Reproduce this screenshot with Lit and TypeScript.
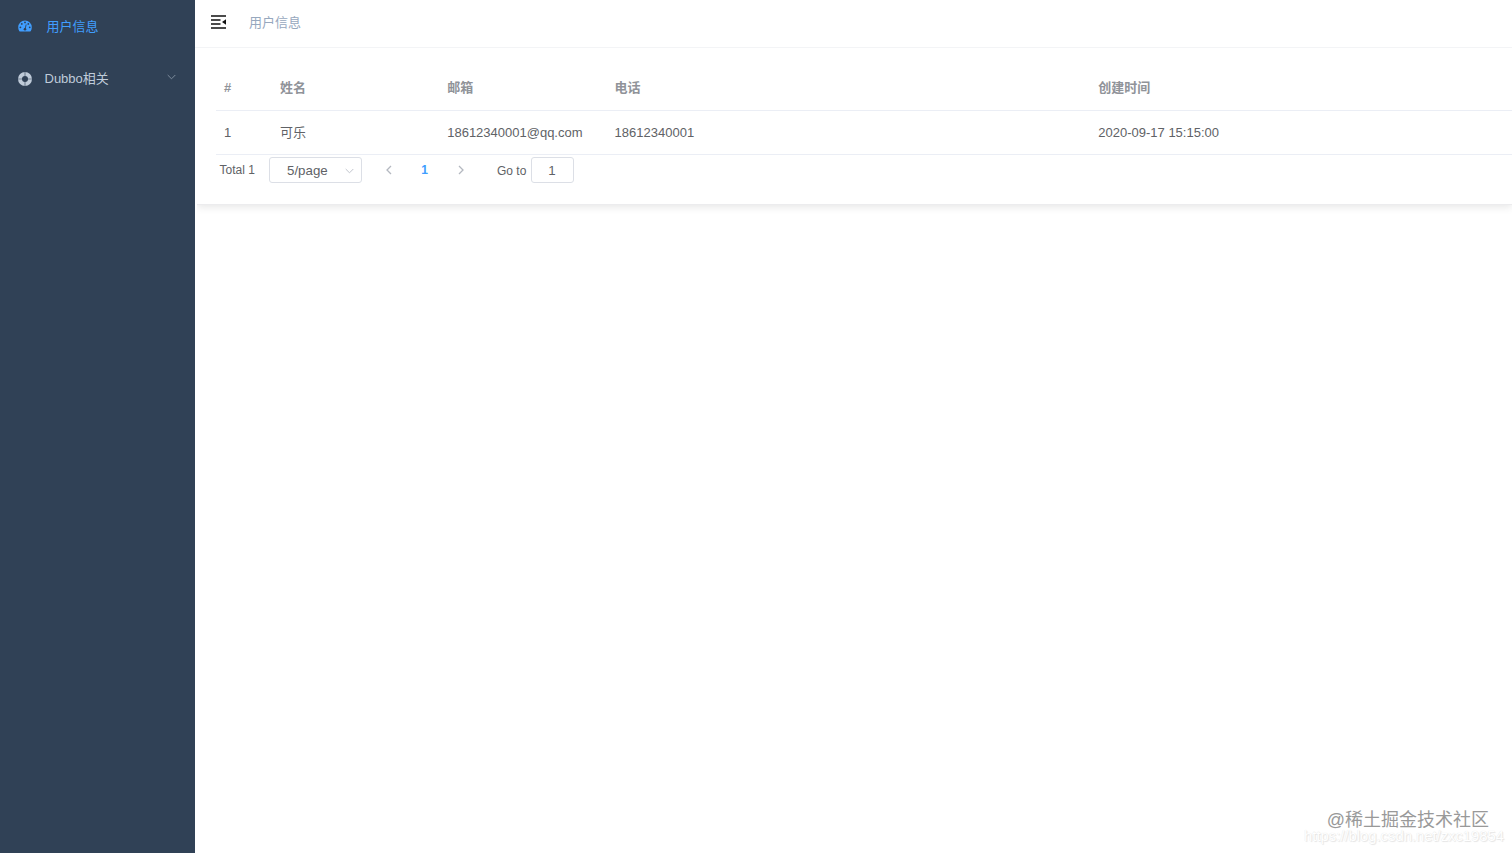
import { LitElement, html, css } from "lit";
import { customElement } from "lit/decorators.js";

interface User {
  id: number;
  name: string;
  email: string;
  phone: string;
  created: string;
}

const users: User[] = [
  { id: 1, name: "可乐", email: "18612340001@qq.com", phone: "18612340001", created: "2020-09-17 15:15:00" },
];

const isHan = (v: string | number) => /[\u4e00-\u9fff]/.test(String(v));

const cell = (v: string | number) => html`<span class="cell ${isHan(v) ? "han" : ""}">${v}</span>`;

@customElement("app-sidebar")
class AppSidebar extends LitElement {
  static styles = css`
    :host { display: block; box-sizing: border-box; width: 195px; flex: none; background: #304156; }
    .item { display: flex; align-items: center; box-sizing: border-box; height: 52px; padding: 2px 19px 0 18px; font-size: 13px; color: #bfcbd9; }
    .item.active { color: #409eff; }
    .icon { width: 14px; height: 14px; flex: none; margin: 0 12.5px 0 0; }
    .active .icon { margin: -2px 14.5px 0 0; }
    .label { flex: 1; padding-bottom: 3px; }
    .active .label { padding-bottom: 4px; }
    .arrow { width: 9px; height: 6px; margin-top: -4px; }
  `;
  render() {
    return html`
      <nav>
        <div class="item active">
          <svg class="icon" viewBox="0 0 14 14">
            <path fill="currentColor" d="M7 1.4A6.8 6.8 0 0 0 .2 8.2c0 1.4.3 2.7 1 3.9.1.2.3.4.6.4h10.4c.3 0 .5-.2.6-.4.7-1.2 1-2.5 1-3.9A6.8 6.8 0 0 0 7 1.4z" />
            <g fill="#304156">
              <circle cx="2.4" cy="8.3" r=".9" /><circle cx="3.8" cy="4.9" r=".9" />
              <circle cx="7" cy="3.4" r=".9" /><circle cx="10.3" cy="4.9" r=".9" />
              <circle cx="11.7" cy="8.3" r=".9" /><circle cx="7" cy="10.3" r="1.3" />
            </g>
            <path d="M7 10.3L8.1 5.9" stroke="#304156" stroke-width=".9" stroke-linecap="round" />
          </svg>
          <span class="label">用户信息</span>
        </div>
        <div class="item">
          <svg class="icon" viewBox="0 0 14 14">
            <circle cx="7" cy="7" r="5" fill="none" stroke="currentColor" stroke-width="4" />
            <path d="M7 0v4.500M7 9.500v4.500M0 7h4.500M9.500 7h4.500" stroke="#304156" stroke-width="1.200" opacity=".5" />
          </svg>
          <span class="label">Dubbo相关</span>
          <svg class="arrow" viewBox="0 0 9 6"><path d="M.7 1l3.8 3.8L8.3 1" fill="none" stroke="#8795a5" stroke-width=".9" /></svg>
        </div>
      </nav>
    `;
  }
}

@customElement("app-pagination")
class AppPagination extends LitElement {
  static styles = css`
    :host { display: flex; height: 26px; margin-top: 2px; padding-left: 3.5px; font-size: 12px; line-height: 26px; color: #606266; }
    .total { width: 49px; flex: none; }
    .box { box-sizing: border-box; height: 26px; border: 1px solid #dcdfe6; border-radius: 3px; font-size: 13.3px; background: #fff; }
    .size { display: flex; align-items: center; justify-content: space-between; width: 93px; padding: 1px 7px 0 17.5px; }
    .chev { width: 9px; height: 6px; }
    .pager { display: flex; align-items: center; margin-left: 23px; padding-bottom: 1px; }
    .pager svg { width: 8px; height: 10px; }
    .current { width: 64px; text-align: center; font-weight: 700; color: #409eff; }
    .goto { margin-left: 32.5px; width: 33.5px; line-height: 28px; }
    .jump { width: 43px; text-align: center; line-height: 26px; }
  `;
  render() {
    return html`
      <span class="total">Total 1</span>
      <div class="box size">
        <span>5/page</span>
        <svg class="chev" viewBox="0 0 9 6"><path d="M.7 1l3.8 3.8L8.3 1" fill="none" stroke="#c0c4cc" stroke-width="1" /></svg>
      </div>
      <div class="pager">
        <svg viewBox="0 0 8 10"><path d="M6 1L2 5l4 4" fill="none" stroke="#b4b8c0" stroke-width="1.3" /></svg>
        <span class="current">1</span>
        <svg viewBox="0 0 8 10"><path d="M2 1l4 4-4 4" fill="none" stroke="#b4b8c0" stroke-width="1.3" /></svg>
      </div>
      <span class="goto">Go to</span>
      <div class="box jump">1</div>
    `;
  }
}

@customElement("app-root")
class AppRoot extends LitElement {
  static styles = css`
    :host { display: flex; position: relative; height: 100vh; overflow: hidden; background: #fff; font-family: "Liberation Sans", "Noto Sans CJK SC", sans-serif; font-size: 13px; }
    .main { flex: 1; min-width: 0; }
    .navbar { display: flex; align-items: center; box-sizing: border-box; height: 48px; padding: 0 0 1px 16px; border-bottom: 1px solid #f3f4f6; color: #97a8be; }
    .burger { width: 15px; height: 14px; margin: -2px 23px 0 0; }
    .title { padding-bottom: 3px; }
    .card { box-sizing: border-box; height: 157px; margin-left: 2px; padding: 18px 0 0 19px; border-bottom: 1px solid #ececee; box-shadow: 0 2px 8px rgba(0, 0, 0, 0.1); clip-path: inset(0 0 -20px 0); }
    .row { display: grid; grid-template-columns: 56px 167.2px 167.4px 483.7px 1fr; align-items: center; box-sizing: border-box; height: 44px; border-bottom: 1px solid #ebeef5; color: #606266; }
    .row.head { height: 45px; padding-bottom: 1px; font-weight: 700; color: #909399; }
    .cell { padding-left: 8px; white-space: nowrap; }
    .han { padding-bottom: 3px; }
    .mark { position: absolute; right: 8px; bottom: 9px; text-align: right; white-space: nowrap; }
    .brand { padding: 1px 15px 0 0; margin-bottom: -1px; font-size: 18px; line-height: 18px; color: #999; text-shadow: -1px -1px 0 #fff; }
    .url { font-size: 14.8px; line-height: 16px; color: #fff; text-shadow: 0 0 1px #ddd, 1px 1px 1px #e6e6e6; }
  `;
  render() {
    return html`
      <app-sidebar></app-sidebar>
      <main class="main">
        <header class="navbar">
          <svg class="burger" viewBox="0 0 15 14">
            <path d="M0 1h15M0 5h9.5M0 9h9.5M0 13h15" stroke="#111" stroke-width="1.5" />
            <path d="M11 7l4-2.8v5.6z" fill="#111" />
          </svg>
          <span class="title">用户信息</span>
        </header>
        <section class="card">
          <div class="row head">${["#", "姓名", "邮箱", "电话", "创建时间"].map(cell)}</div>
          ${users.map((u) => html`<div class="row">${[u.id, u.name, u.email, u.phone, u.created].map(cell)}</div>`)}
          <app-pagination></app-pagination>
        </section>
      </main>
      <div class="mark">
        <div class="brand">@稀土掘金技术社区</div>
        <div class="url">https://blog.csdn.net/zxc19854</div>
      </div>
    `;
  }
}
